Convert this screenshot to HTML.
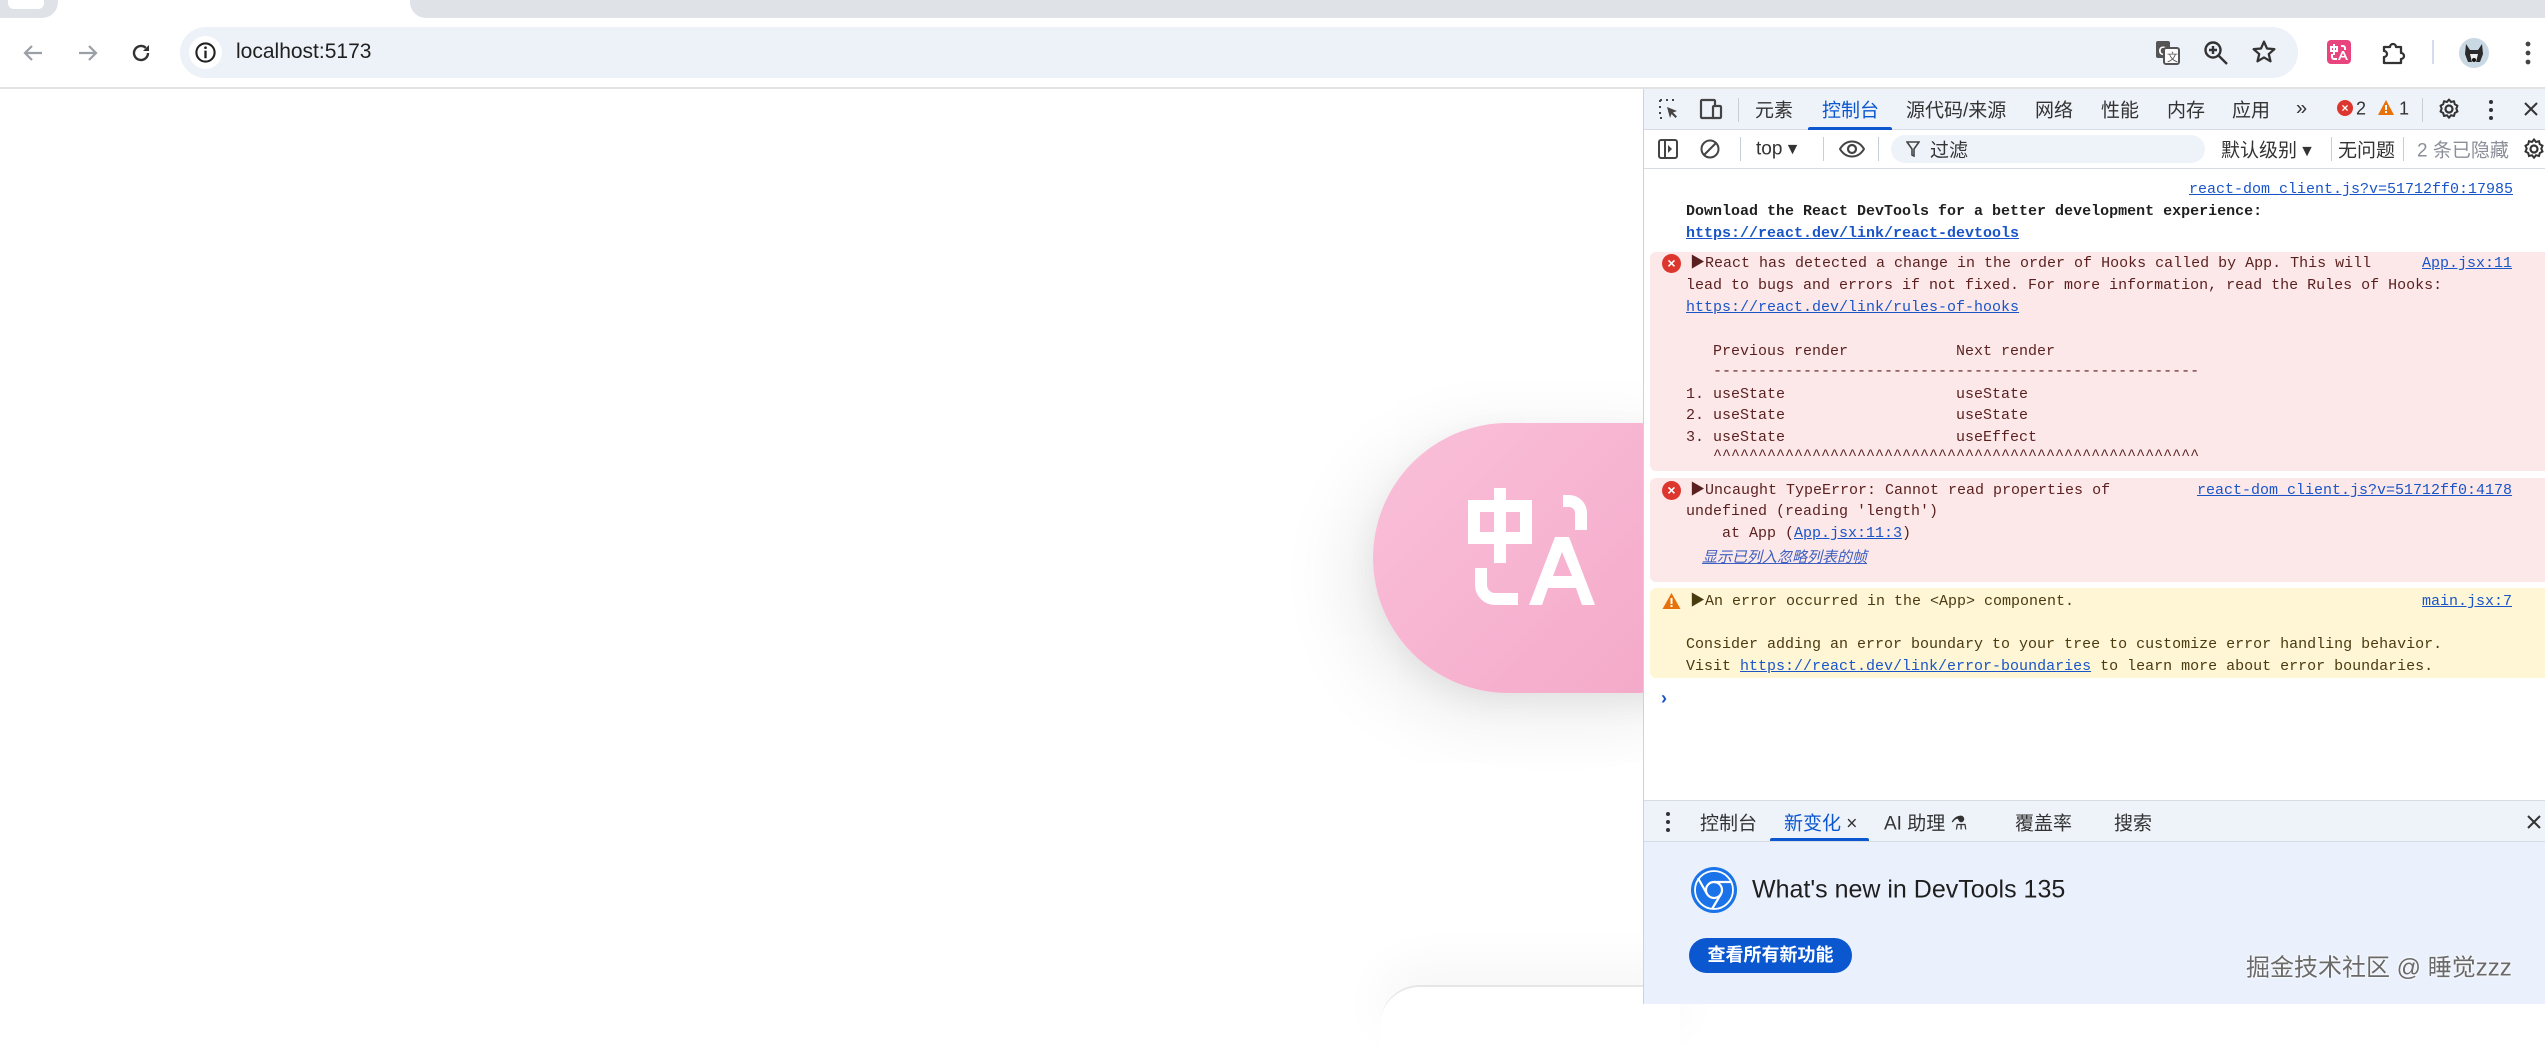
<!DOCTYPE html>
<html><head><meta charset="utf-8"><style>
*{margin:0;padding:0;box-sizing:border-box}
body{width:2545px;height:1004px;overflow:hidden;background:#fff;position:relative;font-family:"Liberation Sans","Noto Sans CJK SC",sans-serif}
.a{position:absolute;white-space:nowrap}
.t{font-size:19px;color:#333;transform:translateY(-50%)}
.m{font-family:"Liberation Mono","Noto Sans CJK SC",monospace;font-size:15px;line-height:22px;position:absolute;white-space:pre;transform:translateY(-50%)}
.lk{color:#1a55c8;text-decoration:underline}
.er{color:#5a1f1f}
.wn{color:#4a3a10}
.div{position:absolute;width:1px;background:#c8cdd6}
</style></head><body>
<!-- tab strip -->
<div class="a" style="left:410px;top:0;width:2135px;height:18px;background:#dfe3e8;border-bottom-left-radius:16px"></div>
<div class="a" style="left:0;top:0;width:58px;height:18px;background:#dfe3e8;border-bottom-right-radius:16px"></div>
<div class="a" style="left:8px;top:0;width:36px;height:9px;background:#fff;border-radius:0 0 6px 6px"></div>
<!-- toolbar -->
<svg class="a" style="left:20px;top:41px" width="26" height="24" viewBox="0 0 26 24"><path d="M22 12H5M12 5l-7 7 7 7" stroke="#9aa0a6" stroke-width="2.2" fill="none"/></svg>
<svg class="a" style="left:75px;top:41px" width="26" height="24" viewBox="0 0 26 24"><path d="M4 12h17M14 5l7 7-7 7" stroke="#9aa0a6" stroke-width="2.2" fill="none"/></svg>
<svg class="a" style="left:129px;top:41px" width="24" height="24" viewBox="0 0 24 24"><path d="M19 12a7 7 0 1 1-2.2-5.1" stroke="#333" stroke-width="2.4" fill="none"/><path d="M20 4v6h-6z" fill="#333"/></svg>
<div class="a" style="left:180px;top:27px;width:2118px;height:51px;background:#edf1f8;border-radius:26px"></div>
<div class="a" style="left:189px;top:36px;width:33px;height:33px;background:#fff;border-radius:50%"></div>
<svg class="a" style="left:194px;top:41px" width="23" height="23" viewBox="0 0 24 24"><circle cx="12" cy="12" r="9.5" stroke="#222" stroke-width="2.2" fill="none"/><rect x="10.8" y="10" width="2.4" height="8" fill="#222"/><circle cx="12" cy="7" r="1.4" fill="#222"/></svg>
<div class="a" style="left:236px;top:52px;transform:translateY(-50%);font-size:21px;color:#1f1f1f">localhost:5173</div>
<svg class="a" style="left:2155px;top:40px" width="26" height="26" viewBox="0 0 26 26"><rect x="1" y="1" width="14" height="17" rx="2" fill="#555"/><text x="3.5" y="15" font-size="12" fill="#fff" font-family="Liberation Sans" font-weight="bold">G</text><rect x="9" y="8" width="15" height="16" rx="2" fill="#fff" stroke="#555" stroke-width="2"/><text x="12" y="21" font-size="11" fill="#555" font-family="Noto Sans CJK SC">文</text></svg>
<svg class="a" style="left:2203px;top:40px" width="26" height="26" viewBox="0 0 26 26"><circle cx="10" cy="10" r="7.5" stroke="#333" stroke-width="2.4" fill="none"/><path d="M15.5 15.5L24 24M10 6v8M6 10h8" stroke="#333" stroke-width="2.4"/></svg>
<svg class="a" style="left:2251px;top:39px" width="26" height="26" viewBox="0 0 24 24"><path d="M12 2.5l2.8 6.3 6.8.6-5.2 4.5 1.6 6.7L12 17l-6 3.6 1.6-6.7-5.2-4.5 6.8-.6z" stroke="#333" stroke-width="2.1" fill="none" stroke-linejoin="round"/></svg>
<svg class="a" style="left:2327px;top:40px" width="24" height="24" viewBox="0 0 24 24"><rect width="24" height="24" rx="4" fill="#e8457f"/><g fill="#fff"><rect x="6" y="4" width="2" height="11"/><path d="M3 6h8v6H3z M5 8v2h4V8z" fill-rule="evenodd"/><path d="M14 5h2a3 3 0 0 1 3 3v2h-2V8a1 1 0 0 0-1-1h-2z"/><path d="M4 14h2v3a1 1 0 0 0 1 1h3v2H7a3 3 0 0 1-3-3z"/><path d="M15 11h2l4 9h-2l-1-2.5h-4L13 20h-2z M16 13l-1.3 3h2.6z" fill-rule="evenodd"/></g></svg>
<svg class="a" style="left:2381px;top:39px" width="28" height="26" viewBox="0 0 28 26"><path d="M3 8h6a3 3 0 0 1 6 0h5v6a3 3 0 0 1 0 6v4H3v-6a3 3 0 0 0 0-6z" stroke="#333" stroke-width="2.3" fill="none" stroke-linejoin="round"/></svg>
<div class="a" style="left:2432px;top:40px;width:2px;height:24px;background:#d5dcf0"></div>
<svg class="a" style="left:2459px;top:38px" width="30" height="30" viewBox="0 0 30 30"><circle cx="15" cy="15" r="15" fill="#c9d9e4"/><path d="M7 6l4 6h8l4-6 1 10-3 8H9l-3-8z" fill="#2a2a2a"/><path d="M11 16h8l-2 8h-4z" fill="#eee"/><circle cx="15" cy="22" r="2" fill="#111"/></svg>
<svg class="a" style="left:2524px;top:40px" width="8" height="26"><circle cx="4" cy="4" r="2.4" fill="#444"/><circle cx="4" cy="13" r="2.4" fill="#444"/><circle cx="4" cy="22" r="2.4" fill="#444"/></svg>
<div class="a" style="left:0;top:87px;width:2545px;height:2px;background:#e3e3e3"></div>

<!-- page content: pink pill -->
<div class="a" style="left:1373px;top:423px;width:400px;height:270px;border-radius:135px;background:linear-gradient(135deg,#fac0d9,#f3a5c6);box-shadow:-20px 20px 80px rgba(0,0,0,0.09),0 10px 30px rgba(0,0,0,0.06)"></div>
<svg class="a" style="left:1460px;top:480px" width="145" height="135" viewBox="1460 480 145 135">
<g fill="#fff"><rect x="1494" y="488" width="12" height="75"/><path d="M1468 500h64v44h-64z M1480 512v20h40v-20z" fill-rule="evenodd"/>
<path d="M1563 495h6a18 18 0 0 1 18 18v17h-12v-17a6 6 0 0 0-6-6h-6z"/>
<path d="M1475 568h12v17a8 8 0 0 0 8 8h23v12h-23a20 20 0 0 1-20-20z"/>
<path d="M1555 537h14l26 68h-13l-6-17h-28l-6 17h-13z M1562 552l-9 24h19z" fill-rule="evenodd"/></g></svg>
<div class="a" style="left:1380px;top:985px;width:300px;height:60px;border-radius:40px 0 0 0;border-top:2px solid #e6e6e6;background:#fff;box-shadow:0 -20px 50px rgba(0,0,0,0.04)"></div>

<!-- DevTools -->
<div class="a" style="left:1643px;top:89px;width:902px;height:915px;background:#fff;border-left:1px solid #cbd2e0"></div>
<div class="a" style="left:1644px;top:89px;width:901px;height:41px;background:#eef2f9;border-bottom:1px solid #d6dbe5"></div>
<div class="a" style="left:1644px;top:130px;width:901px;height:39px;background:#fff;border-bottom:1px solid #d6dbe5"></div>
<svg class="a" style="left:1658px;top:98px" width="22" height="22" viewBox="0 0 22 22"><path d="M2 2h3M8 2h3M14 2h3M2 2v3M2 8v3M2 14v3M2 20h3" stroke="#444" stroke-width="2" stroke-dasharray="2 2"/><path d="M9 9l10 4-4 1.5 4 4-1.5 1.5-4-4L12 20z" fill="#444"/></svg>
<svg class="a" style="left:1699px;top:98px" width="24" height="22" viewBox="0 0 24 22"><rect x="2" y="2" width="14" height="18" rx="1" stroke="#444" stroke-width="2.2" fill="none"/><rect x="14" y="8" width="8" height="12" rx="1" stroke="#444" stroke-width="2.2" fill="#eef2f9"/></svg>
<div class="div" style="left:1738px;top:98px;height:24px"></div>
<div class="a t" style="left:1755px;top:109px">元素</div>
<div class="a t" style="left:1822px;top:109px;color:#0b57d0">控制台</div>
<div class="a" style="left:1808px;top:127px;width:84px;height:3px;background:#0b57d0;border-radius:2px 2px 0 0"></div>
<div class="a t" style="left:1906px;top:109px">源代码/来源</div>
<div class="a t" style="left:2035px;top:109px">网络</div>
<div class="a t" style="left:2101px;top:109px">性能</div>
<div class="a t" style="left:2167px;top:109px">内存</div>
<div class="a t" style="left:2232px;top:109px">应用</div>
<div class="a t" style="left:2296px;top:109px;font-size:20px">»</div>
<div class="a" style="left:2337px;top:100px;width:16px;height:16px;border-radius:50%;background:#dc362e;color:#fff;font-size:12px;line-height:16px;text-align:center;font-weight:bold">×</div>
<div class="a t" style="left:2356px;top:109px;font-size:18px">2</div>
<svg class="a" style="left:2377px;top:99px" width="18" height="17"><path d="M9 1l8 15H1z" fill="#e8710a"/><rect x="8" y="6" width="2" height="5" fill="#fff"/><rect x="8" y="12" width="2" height="2" fill="#fff"/></svg>
<div class="a t" style="left:2399px;top:109px;font-size:18px">1</div>
<div class="div" style="left:2422px;top:98px;height:24px"></div>
<svg class="a" style="left:2437px;top:97px" width="24" height="24" viewBox="0 0 24 24"><circle cx="12" cy="12" r="3.5" stroke="#333" stroke-width="2.2" fill="none"/><path d="M12 2.5l2 2.5 3-.8.8 3 2.7 1.5-1.2 2.9 1.2 2.9-2.7 1.5-.8 3-3-.8-2 2.5-2-2.5-3 .8-.8-3-2.7-1.5 1.2-2.9-1.2-2.9 2.7-1.5.8-3 3 .8z" stroke="#333" stroke-width="2" fill="none" stroke-linejoin="round"/></svg>
<svg class="a" style="left:2487px;top:99px" width="8" height="22"><circle cx="4" cy="3" r="2" fill="#333"/><circle cx="4" cy="11" r="2" fill="#333"/><circle cx="4" cy="19" r="2" fill="#333"/></svg>
<svg class="a" style="left:2523px;top:101px" width="16" height="16"><path d="M2 2l12 12M14 2L2 14" stroke="#333" stroke-width="2"/></svg>
<!-- toolbar2 -->
<svg class="a" style="left:1657px;top:138px" width="22" height="22" viewBox="0 0 22 22"><rect x="2" y="2" width="18" height="18" rx="2" stroke="#444" stroke-width="2" fill="none"/><path d="M8 2v18" stroke="#444" stroke-width="2"/><path d="M11 7l4 4-4 4z" fill="#444"/></svg>
<svg class="a" style="left:1699px;top:138px" width="22" height="22" viewBox="0 0 22 22"><circle cx="11" cy="11" r="8.5" stroke="#444" stroke-width="2" fill="none"/><path d="M5 17L17 5" stroke="#444" stroke-width="2"/></svg>
<div class="div" style="left:1740px;top:137px;height:24px"></div>
<div class="a t" style="left:1756px;top:149px;font-size:19px">top ▾</div>
<div class="div" style="left:1823px;top:137px;height:24px"></div>
<svg class="a" style="left:1838px;top:140px" width="28" height="18" viewBox="0 0 28 18"><path d="M2 9c6-10 18-10 24 0-6 10-18 10-24 0z" stroke="#444" stroke-width="2" fill="none"/><circle cx="14" cy="9" r="4" stroke="#444" stroke-width="2.2" fill="none"/></svg>
<div class="div" style="left:1878px;top:137px;height:24px"></div>
<div class="a" style="left:1891px;top:135px;width:314px;height:28px;background:#eef2f9;border-radius:14px"></div>
<svg class="a" style="left:1906px;top:141px" width="14" height="16"><path d="M1 1h12l-5 7v7l-2-1V8z" stroke="#444" stroke-width="1.6" fill="none"/></svg>
<div class="a t" style="left:1930px;top:149px">过滤</div>
<div class="a t" style="left:2221px;top:149px">默认级别 ▾</div>
<div class="div" style="left:2331px;top:137px;height:24px"></div>
<div class="a t" style="left:2338px;top:149px">无问题</div>
<div class="div" style="left:2403px;top:137px;height:24px"></div>
<div class="a t" style="left:2417px;top:149px;color:#8a8f98">2 条已隐藏</div>
<svg class="a" style="left:2522px;top:137px" width="24" height="24" viewBox="0 0 24 24"><circle cx="12" cy="12" r="3.5" stroke="#333" stroke-width="2.2" fill="none"/><path d="M12 2.5l2 2.5 3-.8.8 3 2.7 1.5-1.2 2.9 1.2 2.9-2.7 1.5-.8 3-3-.8-2 2.5-2-2.5-3 .8-.8-3-2.7-1.5 1.2-2.9-1.2-2.9 2.7-1.5.8-3 3 .8z" stroke="#333" stroke-width="2" fill="none"/></svg>

<!-- console -->
<div class="m lk" style="left:2189px;top:190px">react-dom_client.js?v=51712ff0:17985</div>
<div class="m" style="left:1686px;top:212px;font-weight:bold;color:#1f1f1f">Download the React DevTools for a better development experience:</div>
<div class="m lk" style="left:1686px;top:234px;font-weight:bold">https://react.dev/link/react-devtools</div>

<div class="a" style="left:1650px;top:252px;width:895px;height:219px;background:#fce8e8;border-radius:6px 0 0 6px"></div>
<div class="a" style="left:1662px;top:254px;width:19px;height:19px;border-radius:50%;background:#dc362e;color:#fff;font-size:14px;line-height:19px;text-align:center;font-weight:bold">×</div>
<div class="m er" style="left:1690px;top:264px">▶React has detected a change in the order of Hooks called by App. This will</div>
<div class="m lk" style="left:2422px;top:264px">App.jsx:11</div>
<div class="m er" style="left:1686px;top:286px">lead to bugs and errors if not fixed. For more information, read the Rules of Hooks:</div>
<div class="m lk" style="left:1686px;top:308px">https://react.dev/link/rules-of-hooks</div>
<div class="m er" style="left:1686px;top:352px">   Previous render            Next render</div>
<div class="m er" style="left:1686px;top:372px">   ------------------------------------------------------</div>
<div class="m er" style="left:1686px;top:395px">1. useState                   useState</div>
<div class="m er" style="left:1686px;top:416px">2. useState                   useState</div>
<div class="m er" style="left:1686px;top:438px">3. useState                   useEffect</div>
<div class="m er" style="left:1686px;top:456px">   ^^^^^^^^^^^^^^^^^^^^^^^^^^^^^^^^^^^^^^^^^^^^^^^^^^^^^^</div>

<div class="a" style="left:1650px;top:478px;width:895px;height:104px;background:#fce8e8;border-radius:6px 0 0 6px"></div>
<div class="a" style="left:1662px;top:481px;width:19px;height:19px;border-radius:50%;background:#dc362e;color:#fff;font-size:14px;line-height:19px;text-align:center;font-weight:bold">×</div>
<div class="m er" style="left:1690px;top:491px">▶Uncaught TypeError: Cannot read properties of</div>
<div class="m lk" style="left:2197px;top:491px">react-dom_client.js?v=51712ff0:4178</div>
<div class="m er" style="left:1686px;top:512px">undefined (reading 'length')</div>
<div class="m er" style="left:1722px;top:534px">at App (<span class="lk">App.jsx:11:3</span>)</div>
<div class="m lk" style="left:1702px;top:559px;font-style:italic;color:#3d5fc0">显示已列入忽略列表的帧</div>

<div class="a" style="left:1650px;top:588px;width:895px;height:90px;background:#fef6d5;border-radius:6px 0 0 6px"></div>
<svg class="a" style="left:1662px;top:592px" width="19" height="18"><path d="M9.5 1l9 16H.5z" fill="#e8710a"/><rect x="8.5" y="6" width="2" height="6" fill="#fff"/><rect x="8.5" y="13" width="2" height="2" fill="#fff"/></svg>
<div class="m wn" style="left:1690px;top:602px">▶An error occurred in the &lt;App&gt; component.</div>
<div class="m lk" style="left:2422px;top:602px">main.jsx:7</div>
<div class="m wn" style="left:1686px;top:645px">Consider adding an error boundary to your tree to customize error handling behavior.</div>
<div class="m wn" style="left:1686px;top:667px">Visit <span class="lk">https://react.dev/link/error-boundaries</span> to learn more about error boundaries.</div>
<div class="a" style="left:1661px;top:688px;color:#1a55c8;font-size:18px;font-weight:bold">›</div>

<!-- drawer -->
<div class="a" style="left:1644px;top:800px;width:901px;height:42px;background:#eef2f9;border-top:1px solid #d6dbe5;border-bottom:1px solid #d6dbe5"></div>
<svg class="a" style="left:1664px;top:811px" width="8" height="22"><circle cx="4" cy="3" r="2" fill="#333"/><circle cx="4" cy="11" r="2" fill="#333"/><circle cx="4" cy="19" r="2" fill="#333"/></svg>
<div class="a t" style="left:1700px;top:822px">控制台</div>
<div class="a t" style="left:1784px;top:822px;color:#0b57d0">新变化<span style="color:#333"> ×</span></div>
<div class="a" style="left:1770px;top:838px;width:99px;height:3px;background:#0b57d0;border-radius:2px 2px 0 0"></div>
<div class="a t" style="left:1884px;top:822px">AI 助理 ⚗</div>
<div class="a t" style="left:2015px;top:822px">覆盖率</div>
<div class="a t" style="left:2114px;top:822px">搜索</div>
<svg class="a" style="left:2526px;top:814px" width="16" height="16"><path d="M2 2l12 12M14 2L2 14" stroke="#333" stroke-width="2"/></svg>
<div class="a" style="left:1644px;top:842px;width:901px;height:162px;background:#ebf1fc"></div>
<svg class="a" style="left:1690px;top:866px" width="48" height="48" viewBox="0 0 48 48"><circle cx="24" cy="24" r="23" fill="#1a73e8"/><circle cx="24" cy="24" r="19" fill="none" stroke="#fff" stroke-width="1.8"/><circle cx="24" cy="24" r="8" fill="none" stroke="#fff" stroke-width="2.2"/><path d="M24 16h18M17 28L8 12M31 28l-9 15" stroke="#fff" stroke-width="2.2"/></svg>
<div class="a" style="left:1752px;top:890px;transform:translateY(-50%);font-size:25px;color:#1f1f1f">What's new in DevTools 135</div>
<div class="a" style="left:1689px;top:938px;width:163px;height:35px;background:#0b57d0;border-radius:18px;color:#fff;font-size:18px;font-weight:bold;line-height:35px;text-align:center">查看所有新功能</div>
<div class="a" style="left:2246px;top:965px;transform:translateY(-50%);font-size:24px;color:#6a6a6a;text-shadow:0 0 2px #fff,0 0 2px #fff">掘金技术社区 @ 睡觉zzz</div>
</body></html>
